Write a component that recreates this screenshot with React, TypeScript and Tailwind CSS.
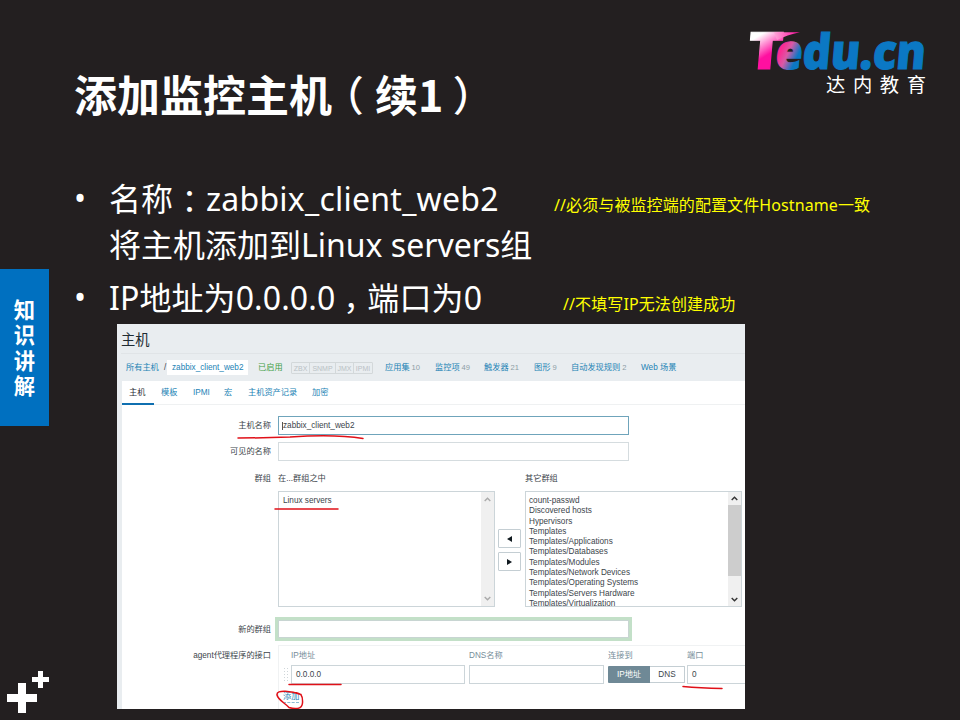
import type { ReactNode } from "react";

const slideFont = "font-['Noto_Sans','Noto_Sans_CJK_SC',sans-serif]";
const uiFont = "font-['Liberation_Sans','Noto_Sans_CJK_SC',sans-serif]";

const groups = [
  "count-passwd",
  "Discovered hosts",
  "Hypervisors",
  "Templates",
  "Templates/Applications",
  "Templates/Databases",
  "Templates/Modules",
  "Templates/Network Devices",
  "Templates/Operating Systems",
  "Templates/Servers Hardware",
  "Templates/Virtualization",
];

// Full-width punctuation centred in its cell.
function Punct({ children, className }: { children: ReactNode; className: string }) {
  return (
    <span className={`inline-block text-center [font-feature-settings:'halt'] font-['Noto_Sans_CJK_SC',sans-serif] ${className}`}>
      {children}
    </span>
  );
}

function Logo() {
  return (
    <svg className="h-[110px] w-[220px] overflow-visible" viewBox="740 0 220 110">
      <defs>
        <linearGradient id="tee" gradientUnits="userSpaceOnUse" x1="758" y1="30" x2="778" y2="60">
          <stop offset="0.1" stopColor="#ffffff" />
          <stop offset="0.7" stopColor="#ff10a0" />
        </linearGradient>
        <linearGradient id="arm" gradientUnits="userSpaceOnUse" x1="772" y1="0" x2="798" y2="0">
          <stop offset="0" stopColor="#ffb4dd" />
          <stop offset="1" stopColor="#ff10a0" />
        </linearGradient>
        <linearGradient id="word" gradientUnits="userSpaceOnUse" x1="777" y1="56" x2="798" y2="64">
          <stop offset="0" stopColor="#fb2a92" />
          <stop offset="0.35" stopColor="#d95aa6" />
          <stop offset="0.8" stopColor="#0b78c4" />
        </linearGradient>
      </defs>
      <g transform="translate(0 70) skewX(-5) translate(0 -70)">
        <text x="746.500" y="69.500" fontSize="51.5" fontWeight="800" textLength="35" lengthAdjust="spacingAndGlyphs" fill="url(#tee)" stroke="url(#tee)" strokeWidth="1" className="font-['Open_Sans',sans-serif]">T</text>
        <text x="774.500" y="69.500" fontSize="48.5" fontWeight="800" textLength="150" lengthAdjust="spacingAndGlyphs" fill="url(#word)" stroke="url(#word)" strokeWidth="1.1" className="font-['Open_Sans',sans-serif]">edu.cn</text>
      </g>
      <path d="M774 32.200 L800 32.200 Q787 35 777 40 Z" fill="url(#arm)" />
      <text x="826" y="92" fontSize="19.3" letterSpacing="7.6" fill="#ffffff" className="font-['Noto_Sans_CJK_SC',sans-serif]">达内教育</text>
    </svg>
  );
}

function Chevron({ up, color }: { up?: boolean; color: string }) {
  return (
    <svg className="h-[5px] w-[7px]" viewBox="0 0 7 5" fill="none" stroke={color} strokeWidth="1.4">
      <path d={up ? "M.7 4 3.5 1.2 6.3 4" : "M.7 1 3.5 3.8 6.3 1"} />
    </svg>
  );
}

function NavLink({ children, count, className }: { children: ReactNode; count?: string; className: string }) {
  return (
    <span className={`shrink-0 text-[#2383b5] ${className}`}>
      {children}
      {count && <span className="ml-[2px] text-[7.6px] text-[#8d9da6]">{count}</span>}
    </span>
  );
}

function Label({ children, className = "" }: { children: ReactNode; className?: string }) {
  return <div className={`mr-[7px] w-[149px] shrink-0 text-right ${className}`}>{children}</div>;
}

function HostForm() {
  return (
    <section className={`relative ml-[68px] flex h-[385px] w-[628px] flex-col overflow-hidden whitespace-nowrap bg-[#e9edf0] text-[8.2px] leading-[10px] text-[#3c454b] ${uiFont}`}>
      <h2 className="ml-[4px] h-[30px] border-b border-[#e0e4e7] pt-[9px] text-[14.3px] leading-[14px] text-[#1f2c33]">主机</h2>
      <nav className="flex h-[27px] shrink-0 items-center pl-[9px]">
        <NavLink className="w-[38px]">所有主机</NavLink>
        <span className="w-[3px]">/</span>
        <span className="flex h-[15px] w-[81px] items-center bg-white pl-[5px] text-[#2383b5]">zabbix_client_web2</span>
        <span className="ml-[10px] w-[33px] text-[#429e47]">已启用</span>
        <span className="flex h-[12px] w-[82px] divide-x divide-[#d3d8da] rounded-[1px] border border-[#d3d8da] text-center text-[7px] leading-[11px] text-[#b9c1c5]">
          <span className="w-[18px]">ZBX</span>
          <span className="w-[26px]">SNMP</span>
          <span className="w-[18px]">JMX</span>
          <span className="w-[18px]">IPMI</span>
        </span>
        <NavLink className="ml-[12px] w-[50px]" count="10">应用集</NavLink>
        <NavLink className="w-[49px]" count="49">监控项</NavLink>
        <NavLink className="w-[50px]" count="21">触发器</NavLink>
        <NavLink className="w-[37px]" count="9">图形</NavLink>
        <NavLink className="w-[70px]" count="2">自动发现规则</NavLink>
        <NavLink className="w-[40px]">Web 场景</NavLink>
      </nav>
      <div className="ml-[5px] h-[328px] bg-white">
        <div className="flex h-[24px] border-b border-[#eff1f2] text-[#2383b5]">
          <span className="h-[24px] w-[32px] border-b-2 border-[#0f6fb0] pl-[7px] pt-[7px] text-[#1f2c33]">主机</span>
          <span className="w-[32px] pl-[7px] pt-[7px]">模板</span>
          <span className="w-[32px] pl-[7px] pt-[7px]">IPMI</span>
          <span className="w-[23px] pl-[6px] pt-[7px]">宏</span>
          <span className="w-[64px] pl-[7px] pt-[7px]">主机资产记录</span>
          <span className="pl-[7px] pt-[7px]">加密</span>
        </div>
        <div className="mt-[11px] flex h-[19px] items-center">
          <Label>主机名称</Label>
          <div className="flex h-[19px] w-[351px] items-center border border-[#6fa4bb] pl-[3px]">
            <span className="h-[8px] w-px bg-[#555]" />
            <span>zabbix_client_web2</span>
          </div>
        </div>
        <div className="mt-[7px] flex h-[19px] items-center">
          <Label>可见的名称</Label>
          <div className="h-[19px] w-[351px] border border-[#d5dcdf]" />
        </div>
        <div className="mt-[12px] flex h-[134px]">
          <Label className="pt-px">群组</Label>
          <div className="w-[217px]">
            <div className="h-[18px] pt-px">在...群组之中</div>
            <div className="flex h-[116px] border border-[#ccd5d9]">
              <div className="flex-1 pl-[4px] pt-[4px]">Linux servers</div>
              <div className="flex w-[13px] flex-col items-center justify-between bg-[#f0f0f0] py-[5px]">
                <Chevron up color="#aaaaaa" />
                <Chevron color="#aaaaaa" />
              </div>
            </div>
          </div>
          <div className="ml-[3px] flex w-[23px] flex-col gap-[4px] pt-[56px]">
            <div className="flex h-[19px] items-center justify-center rounded-[1px] border border-[#c4ced3]">
              <svg className="h-[6px] w-[5px]" viewBox="0 0 5 6"><path d="M5 0V6L0 3Z" fill="#10191f" /></svg>
            </div>
            <div className="flex h-[19px] items-center justify-center rounded-[1px] border border-[#c4ced3]">
              <svg className="h-[6px] w-[5px]" viewBox="0 0 5 6"><path d="M0 0V6L5 3Z" fill="#10191f" /></svg>
            </div>
          </div>
          <div className="ml-[4px] w-[217px]">
            <div className="h-[18px] pt-px">其它群组</div>
            <div className="flex h-[116px] overflow-hidden border border-[#ccd5d9]">
              <div className="flex-1 pl-[3px] pt-[4px] leading-[10.3px]">
                {groups.map((g) => <div key={g}>{g}</div>)}
              </div>
              <div className="flex w-[13px] flex-col items-center bg-[#f0f0f0]">
                <div className="flex h-[13px] items-center"><Chevron up color="#333333" /></div>
                <div className="h-[71px] w-full bg-[#cdcdcd]" />
                <div className="mt-auto flex h-[14px] items-center"><Chevron color="#333333" /></div>
              </div>
            </div>
          </div>
        </div>
        <div className="mt-[10px] flex h-[24px] items-center">
          <Label className="pt-px">新的群组</Label>
          <div className="-ml-[3px] h-[24px] w-[357px] border-[3px] border-[#c3e0c8]">
            <div className="h-[18px] border border-[#c8d5d2]" />
          </div>
        </div>
        <div className="mt-[4px] flex h-[64px]">
          <Label className="pt-[6px]">agent代理程序的接口</Label>
          <div className="w-[467px] shrink-0 border-l border-t border-[#f0f2f3] pt-[5px]">
            <div className="flex h-[14px] pl-[12px] text-[#768d99]">
              <span className="w-[178px]">IP地址</span>
              <span className="w-[139px]">DNS名称</span>
              <span className="w-[79px]">连接到</span>
              <span>端口</span>
            </div>
            <div className="flex h-[19px] items-center *:shrink-0">
              <div className="ml-[4px] mr-[3px] h-[15px] w-[5px] bg-[radial-gradient(#cfd6d9_0.8px,transparent_1px)] bg-[size:3px_3px]" />
              <div className="flex h-[19px] w-[174px] items-center border border-[#ccd5d9] pl-[4px]">0.0.0.0</div>
              <div className="ml-[4px] h-[19px] w-[135px] border border-[#ccd5d9]" />
              <div className="ml-[4px] flex h-[17px] w-[42px] items-center justify-center rounded-l-[1px] bg-[#6f8996] text-white">IP地址</div>
              <div className="flex h-[17px] w-[35px] items-center justify-center rounded-r-[1px] border border-l-0 border-[#c4ced3]">DNS</div>
              <div className="ml-[2px] flex h-[19px] w-[60px] items-center border border-r-0 border-[#ccd5d9] pl-[4px]">0</div>
            </div>
            <span className="ml-[4px] mt-[8px] inline-block h-[11px] border-b border-dashed border-[#8dbbd4] text-[#2383b5]">添加</span>
          </div>
        </div>
      </div>
      {/* Hand-drawn red marks over the form */}
      <svg className="absolute inset-0 h-[385px] w-[628px]" viewBox="117 324 628 385" fill="none" stroke="#e01018" strokeWidth="1.5" strokeLinecap="round">
        <path d="M238 438Q262 438 290 437 335 434 363 438.5" />
        <path d="M275 509H338" />
        <path d="M289 684.5H341" />
        <path d="M683 686.5Q700 688 722 688.5" />
        <path d="M301 694.5C292 691 276 689 277 695 278 700 285 703 289 707.5 294 709 302 710 302.500 703 303 695 301 693 294 692.500" />
      </svg>
    </section>
  );
}

export default function App() {
  return (
    <div className={`flex h-[720px] w-[960px] overflow-hidden bg-[#231f20] text-white ${slideFont}`}>
      <aside className="flex w-[49px] shrink-0 flex-col pt-[269px]">
        <div className="flex h-[157px] flex-col items-center bg-[#0070c0] pt-[28px] text-[21.3px] font-bold leading-[25.4px]">
          <span>知</span>
          <span>识</span>
          <span>讲</span>
          <span>解</span>
        </div>
        <svg className="ml-[7px] mt-[245px] h-[42px] w-[42px]" viewBox="7 671 42 42" fill="#ffffff">
          <path d="M18 683H26V694H37V702H26V713H18V702H7V694H18Z" />
          <path d="M38 671H43V677H49V682H43V688H38V682H32V677H38Z" />
        </svg>
      </aside>
      <main className="flex w-[911px] flex-col whitespace-nowrap">
        <header className="flex h-[172px] justify-between pl-[25px]">
          <h1 className="pt-[67px] font-['Noto_Sans_CJK_SC',sans-serif] text-[43px] font-bold leading-[52px]">
            添加监控主机<Punct className="w-[43px] align-top text-[41px] font-medium">（</Punct>续1<Punct className="-ml-[2px] w-[43px] align-top text-[41px] font-medium">）</Punct>
          </h1>
          <Logo />
        </header>
        <div className="h-[152px] shrink-0 text-[32px] leading-[46px]">
          <div className="flex h-[53px] pt-[2px]">
            <span className="w-[60px] pl-[25px] pt-px">•</span>
            <span className="w-[445px]">名称<Punct className="w-[33px]">：</Punct><span className="tracking-[0.24px]">zabbix_client_web2</span></span>
            <span className="pt-[8px] text-[16px] leading-[46px] tracking-[0.1px] text-[#ffff00]">//必须与被监控端的配置文件Hostname一致</span>
          </div>
          <div className="-mt-[3px] h-[49px] pl-[60px]">将主机添加到Linux servers组</div>
          <div className="flex h-[53px] pt-[2px]">
            <span className="w-[60px] pl-[25px] pt-px">•</span>
            <span className="w-[454px] tracking-[0.1px]">IP地址为0.0.0.0<Punct className="w-[32px]">，</Punct>端口为0</span>
            <span className="pt-[8px] text-[16px] leading-[46px] tracking-[0.1px] text-[#ffff00]">//不填写IP无法创建成功</span>
          </div>
        </div>
        <HostForm />
      </main>
    </div>
  );
}
